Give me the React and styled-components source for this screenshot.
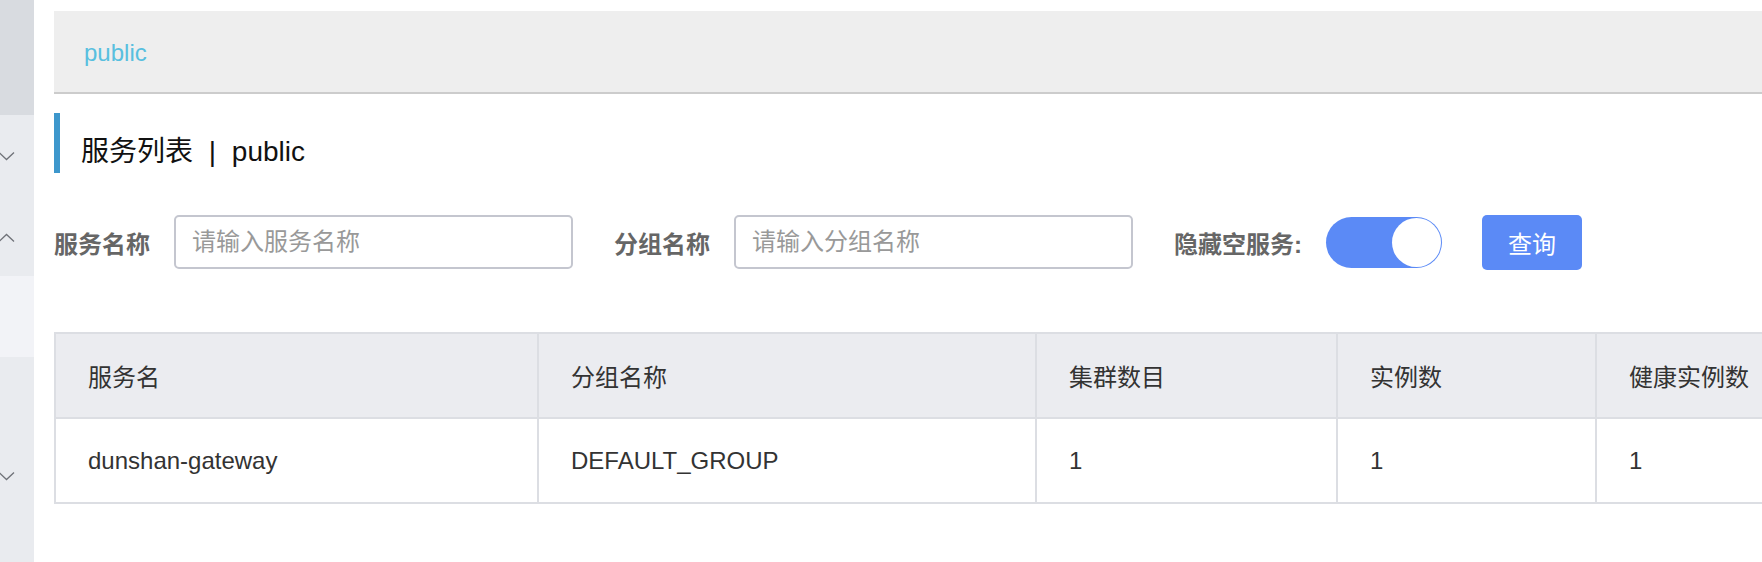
import styled, { createGlobalStyle } from "styled-components";

const GlobalStyle = createGlobalStyle`
  html, body {
    margin: 0;
    padding: 0;
    background: #ffffff;
    font-family: "Liberation Sans", "Noto Sans CJK SC", sans-serif;
    overflow: hidden;
  }
`;

const columns = [
  { key: "name", title: "服务名", width: 483 },
  { key: "group", title: "分组名称", width: 498 },
  { key: "clusters", title: "集群数目", width: 301 },
  { key: "instances", title: "实例数", width: 259 },
  { key: "healthy", title: "健康实例数", width: 300 },
];

const rows = [
  {
    name: "dunshan-gateway",
    group: "DEFAULT_GROUP",
    clusters: "1",
    instances: "1",
    healthy: "1",
  },
];

const Chevron = ({ up }) => (
  <svg width="15" height="10" viewBox="0 0 15 10">
    <path
      d={up ? "M-1 8.5 L6.5 1.5 L14 8.5" : "M-1 1.5 L6.5 8.5 L14 1.5"}
      fill="none"
      stroke="#6f7278"
      strokeWidth="1.3"
    />
  </svg>
);

const App = () => {
  return (
    <>
      <GlobalStyle />
      <Page>
        <Sidebar>
          <SideBlock $bg="#d8dbe0" $h={115} />
          <SideItem $h={81} $pad={36}>
            <Chevron />
          </SideItem>
          <SideItem $h={80} $pad={37}>
            <Chevron up />
          </SideItem>
          <SideBlock $bg="#f2f3f7" $h={81} />
          <SideItem $h={205} $pad={114}>
            <Chevron />
          </SideItem>
        </Sidebar>
        <Main>
          <Breadcrumb>
            <Crumb>public</Crumb>
          </Breadcrumb>
          <TitleBar>
            服务列表 <Divider>|</Divider> public
          </TitleBar>
          <Filters>
            <Field>
              <Label>服务名称</Label>
              <Input placeholder="请输入服务名称" />
            </Field>
            <Field>
              <Label>分组名称</Label>
              <Input placeholder="请输入分组名称" />
            </Field>
            <Field>
              <Label>隐藏空服务:</Label>
              <Switch>
                <Knob />
              </Switch>
            </Field>
            <QueryButton>查询</QueryButton>
          </Filters>
          <Table>
            <colgroup>
              {columns.map((c) => (
                <col key={c.key} style={{ width: c.width }} />
              ))}
            </colgroup>
            <thead>
              <tr>
                {columns.map((c) => (
                  <Th key={c.key}>{c.title}</Th>
                ))}
              </tr>
            </thead>
            <tbody>
              {rows.map((r, i) => (
                <tr key={i}>
                  {columns.map((c) => (
                    <Td key={c.key}>{r[c.key]}</Td>
                  ))}
                </tr>
              ))}
            </tbody>
          </Table>
        </Main>
      </Page>
    </>
  );
};

export default App;

/* ===== layout ===== */

const Page = styled.div`
  display: flex;
  width: 1762px;
  height: 562px;
  overflow: hidden;
`;

const Sidebar = styled.aside`
  width: 34px;
  flex-shrink: 0;
  display: flex;
  flex-direction: column;
  background: #e9ebef;
`;

const SideBlock = styled.div`
  height: ${({ $h }) => $h}px;
  background: ${({ $bg }) => $bg};
`;

const SideItem = styled.div`
  height: ${({ $h }) => $h}px;
  background: #e9ebef;
  padding-top: ${({ $pad }) => $pad}px;
  box-sizing: border-box;

  svg {
    display: block;
  }
`;

const Main = styled.main`
  flex: 1;
  min-width: 0;
  padding: 11px 0 0 20px;
  overflow: hidden;
`;

const Breadcrumb = styled.div`
  height: 83px;
  box-sizing: border-box;
  padding: 3px 0 0 30px;
  background: #eeeeee;
  border-bottom: 2px solid #cccccc;
  display: flex;
  align-items: center;
`;

const Crumb = styled.span`
  font-size: 24px;
  color: #58bfdf;
`;

const TitleBar = styled.h1`
  margin: 19px 0 0;
  height: 60px;
  box-sizing: border-box;
  border-left: 6px solid #3d97cc;
  padding: 22px 0 0 21px;
  display: flex;
  align-items: flex-start;
  font-size: 28px;
  line-height: 34px;
  font-weight: normal;
  color: #111;
  white-space: pre;
`;

const Divider = styled.span`
  margin: 0 8px;
`;

const Filters = styled.div`
  display: flex;
  align-items: center;
  margin-top: 42px;
  height: 54px;
`;

const Field = styled.div`
  display: flex;
  align-items: center;
  gap: 24px;
  margin-right: 41px;
`;

const Label = styled.label`
  font-size: 24px;
  font-weight: bold;
  color: #666666;
  white-space: nowrap;
`;

const Input = styled.input`
  width: 399px;
  height: 54px;
  box-sizing: border-box;
  border: 2px solid #c4c6cf;
  border-radius: 5px;
  padding: 0 16px;
  font-size: 24px;
  font-family: inherit;
  color: #333;
  outline: none;

  &::placeholder {
    color: #999999;
  }
`;

const Switch = styled.div`
  width: 116px;
  height: 51px;
  border-radius: 26px;
  background: #5b8af6;
  display: flex;
  align-items: center;
  justify-content: flex-end;
  padding-right: 1px;
  box-sizing: border-box;
`;

const Knob = styled.div`
  width: 49px;
  height: 49px;
  border-radius: 50%;
  background: #ffffff;
`;

const QueryButton = styled.button`
  margin-left: -1px;
  width: 100px;
  height: 55px;
  border: none;
  border-radius: 5px;
  background: #5b8af6;
  color: #ffffff;
  font-size: 24px;
  font-family: inherit;
`;

const Table = styled.table`
  margin-top: 63px;
  border-collapse: collapse;
  table-layout: fixed;
  width: 1841px;
  font-size: 24px;
  color: #333333;
`;

const Th = styled.th`
  height: 85px;
  background: #ebecf0;
  border: 2px solid #dcdee3;
  text-align: left;
  font-weight: normal;
  padding: 0 32px;
  box-sizing: border-box;
`;

const Td = styled.td`
  height: 85px;
  border: 2px solid #dcdee3;
  padding: 0 32px;
  box-sizing: border-box;
`;
